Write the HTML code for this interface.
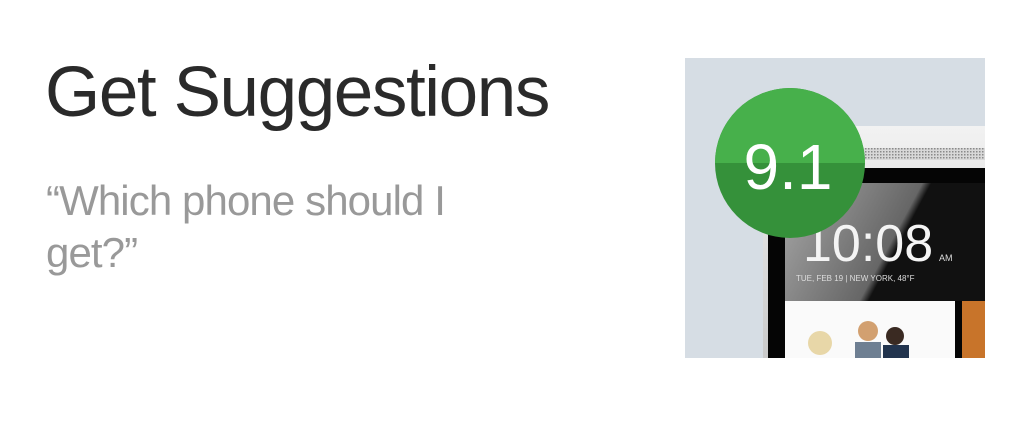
<!DOCTYPE html>
<html><head><meta charset="utf-8"><style>
html,body{margin:0;padding:0;background:#fff;width:1032px;height:444px;overflow:hidden;position:relative;font-family:"Liberation Sans",sans-serif}
h1{position:absolute;left:45px;top:50px;margin:0;font-weight:300;font-size:71px;line-height:86px;color:#2a2a2a;letter-spacing:-1.4px;white-space:nowrap}
.q{position:absolute;left:46px;top:175px;margin:0;font-size:42px;line-height:52px;color:#999;letter-spacing:-0.9px;width:440px}
.img{position:absolute;left:685px;top:58px;width:300px;height:300px;background:#d6dde4;overflow:hidden}
</style></head><body>
<h1>Get Suggestions</h1>
<p class="q">“Which phone should I get?”</p>
<div class="img">
<svg width="300" height="300" viewBox="0 0 300 300">
<defs>
<linearGradient id="sil" x1="0" y1="0" x2="0" y2="1"><stop offset="0" stop-color="#f2f2f2"/><stop offset="1" stop-color="#c8c8c8"/></linearGradient>
<linearGradient id="scr" x1="0" y1="0" x2="1" y2="0.3"><stop offset="0" stop-color="#a8a8a8"/><stop offset="0.6" stop-color="#666"/><stop offset="0.64" stop-color="#111"/><stop offset="1" stop-color="#111"/></linearGradient>
<pattern id="grille" width="3" height="3" patternUnits="userSpaceOnUse"><rect width="3" height="3" fill="#d8d8d8"/><rect width="1.5" height="1.5" fill="#8a8a8a"/></pattern>
</defs>
<rect x="78" y="68" width="240" height="240" rx="8" fill="url(#sil)"/>
<rect x="150" y="90" width="160" height="12" fill="url(#grille)"/>
<rect x="140" y="66" width="12" height="3" fill="#333"/>
<rect x="83" y="110" width="230" height="200" fill="#050505"/>
<rect x="100" y="125" width="210" height="118" fill="url(#scr)"/>
<text x="118" y="203" font-family="Liberation Sans" font-size="52" font-weight="300" fill="#f4f4f4">10:08</text>
<text x="254" y="203" font-family="Liberation Sans" font-size="9" fill="#ddd">AM</text>
<text x="111" y="223" font-family="Liberation Sans" font-size="8" fill="#ddd">TUE, FEB 19 | NEW YORK, 48°F</text>
<rect x="100" y="243" width="170" height="60" fill="#fafafa"/>
<rect x="277" y="243" width="30" height="60" fill="#c8742a"/>
<circle cx="135" cy="285" r="12" fill="#e8d7a8"/>
<circle cx="183" cy="273" r="10" fill="#d2a070"/>
<rect x="170" y="284" width="26" height="20" fill="#6e7f92"/>
<circle cx="210" cy="278" r="9" fill="#3a2a22"/>
<rect x="198" y="287" width="26" height="16" fill="#22344e"/>
<circle cx="105" cy="105" r="75" fill="#35913a"/>
<path d="M30 105 A75 75 0 0 1 180 105 Z" fill="#47b04b"/>
<text x="103" y="131" text-anchor="middle" font-family="Liberation Sans" font-size="64" fill="#fff">9.1</text>
</svg>
</div>
</body></html>
